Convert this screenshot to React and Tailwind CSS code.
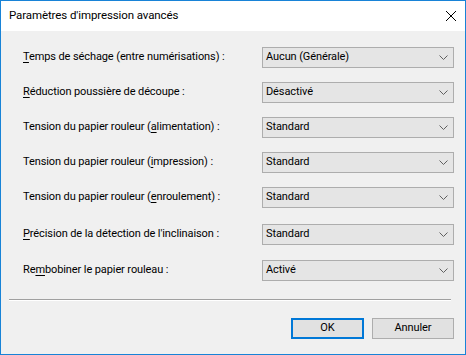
import React from 'react';

const rows = [
    { pre: '', key: 'T', post: 'emps de séchage (entre numérisations) :', value: 'Aucun (Générale)', mt: 'mt-0' },
    { pre: '', key: 'R', post: 'éduction poussière de découpe :', value: 'Désactivé', mt: 'mt-[14px]' },
    { pre: 'Tension du papier rouleur (', key: 'a', post: 'limentation) :', value: 'Standard', mt: 'mt-[14px]' },
    { pre: 'Tension du papier rouleur (', key: 'i', post: 'mpression) :', value: 'Standard', mt: 'mt-[14px]' },
    { pre: 'Tension du papier rouleur (', key: 'e', post: 'nroulement) :', value: 'Standard', mt: 'mt-[14px]' },
    { pre: '', key: 'P', post: 'récision de la détection de l\'inclinaison :', value: 'Standard', mt: 'mt-[16px]' },
    { pre: 'Re', key: 'm', post: 'bobiner le papier rouleau :', value: 'Activé', mt: 'mt-[15px]' },
];

const Chevron = () => (
    <svg width="9" height="5" viewBox="0 0 9 5" className="mr-[5px]">
        <path d="M0.5 0.5 L4.5 4.5 L8.5 0.5" fill="none" stroke="#606060" strokeWidth="1" />
    </svg>
);

const SettingRow = ({ row }) => (
    <div className={`flex items-center h-[21px] ${row.mt}`}>
        <div className="w-[261px] shrink-0 pl-[22px] whitespace-nowrap">
            {row.pre}<span className="underline underline-offset-2">{row.key}</span>{row.post}
        </div>
        <div className="w-[192px] shrink-0 h-[21px] flex items-center justify-between bg-[#e5e5e5] border border-[#adadad]">
            <span className="pl-[3px]">{row.value}</span>
            <Chevron />
        </div>
    </div>
);

export default function App() {
    return (
        <div
            className="w-[466px] h-[355px] flex flex-col border border-[#1883d7] bg-[#f0f0f0] text-[11px] tracking-[-0.1px] text-black"
            style={{ fontFamily: 'Roboto, "Noto Sans", sans-serif' }}
        >
            <div className="h-[30px] bg-white flex items-center justify-between pl-[8px] pr-[9px] text-[11.5px]">
                <span>Paramètres d'impression avancés</span>
                <svg width="10" height="10" viewBox="0 0 10 10">
                    <path d="M0 0 L10 10 M10 0 L0 10" stroke="#000" strokeWidth="1" />
                </svg>
            </div>

            <div className="flex-1 flex flex-col pt-[16px]">
                {rows.map((row, i) => (
                    <SettingRow key={i} row={row} />
                ))}

                {/* etched separator */}
                <div className="mt-[18px] ml-[8px] w-[442px] h-[2px] border-t border-[#a0a0a0] border-b border-b-white" />

                <div className="flex justify-end gap-[8px] mt-[17px] pr-[11px]">
                    <button className="w-[73px] h-[21px] bg-[#e1e1e1] border-2 border-[#0078d7]">OK</button>
                    <button className="w-[82px] h-[21px] bg-[#e1e1e1] border border-[#adadad]">Annuler</button>
                </div>
            </div>
        </div>
    );
}
